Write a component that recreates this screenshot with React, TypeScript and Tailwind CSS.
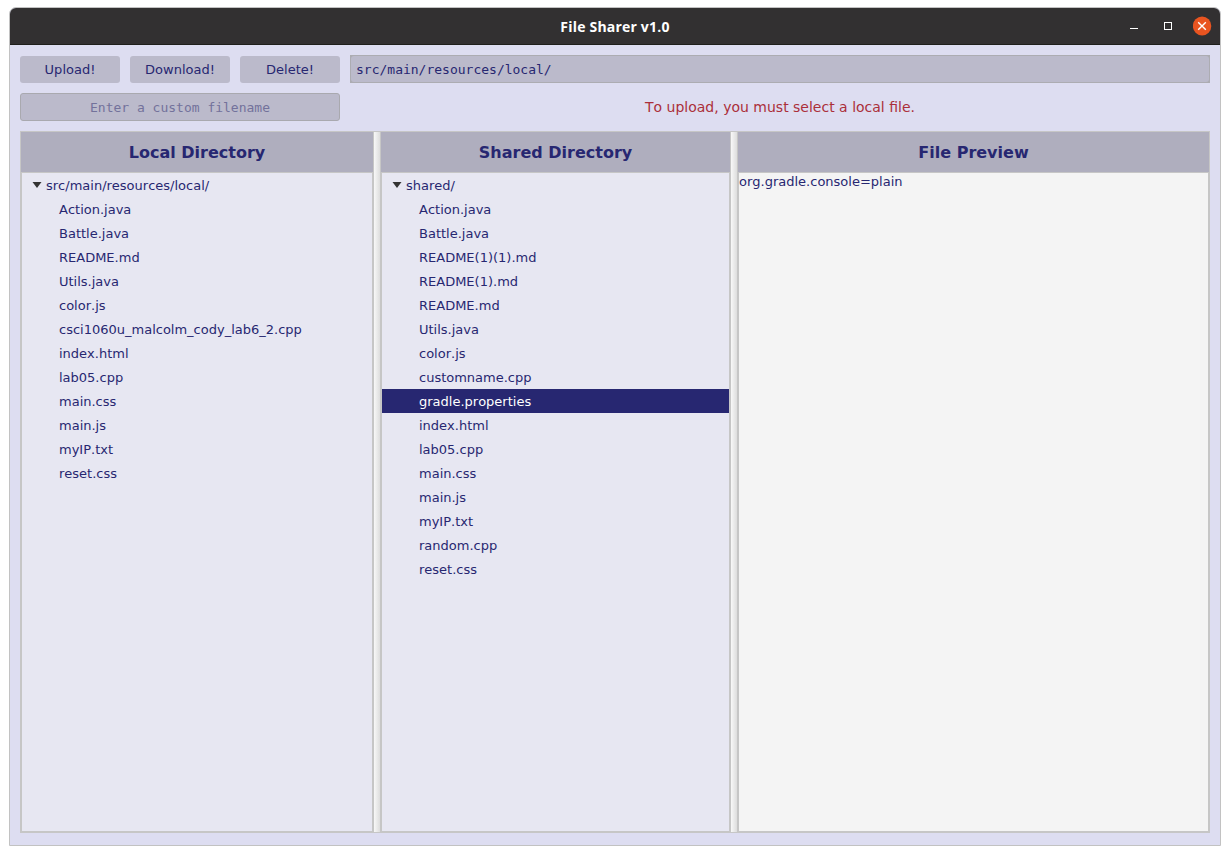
import type { ReactNode } from "react";

const localFiles = [
  "Action.java", "Battle.java", "README.md", "Utils.java", "color.js",
  "csci1060u_malcolm_cody_lab6_2.cpp", "index.html", "lab05.cpp", "main.css",
  "main.js", "myIP.txt", "reset.css",
];

const sharedFiles = [
  "Action.java", "Battle.java", "README(1)(1).md", "README(1).md", "README.md",
  "Utils.java", "color.js", "customname.cpp", "gradle.properties", "index.html",
  "lab05.cpp", "main.css", "main.js", "myIP.txt", "random.cpp", "reset.css",
];

function TitleBar() {
  return (
    <header className="grid h-[37px] shrink-0 grid-cols-[1fr_auto_1fr] items-center rounded-t-[6px] border-b border-[#1f1f1b] bg-[#323031] pr-2">
      <span />
      <h1 className="pt-px pl-2 font-['Open_Sans',sans-serif] text-[14px] leading-5 font-bold tracking-[0.2px] text-white">File Sharer v1.0</h1>
      <div className="flex items-center justify-end">
        <button aria-label="Minimize" className="mr-[26px]">
          <svg width="8" height="8" className="block" shapeRendering="crispEdges"><path d="M0 6.5h8" stroke="#fff" /></svg>
        </button>
        <button aria-label="Maximize" className="mr-[21px]">
          <svg width="8" height="8" className="block" shapeRendering="crispEdges"><path d="M.5.5h7v7h-7z" fill="none" stroke="#fff" /></svg>
        </button>
        <button aria-label="Close">
          <svg width="19" height="20" viewBox="0 0 19 20" className="block">
            <ellipse cx="9.1" cy="10" rx="9.2" ry="9.5" fill="#e95420" />
            <path d="M5.2 6.2l7.6 7.6M12.8 6.2l-7.6 7.6" stroke="#fff" strokeWidth="1.4" />
          </svg>
        </button>
      </div>
    </header>
  );
}

function Button({ children }: { children: ReactNode }) {
  return (
    <button className="h-[27px] w-[100px] rounded-[3px] bg-[#bbbacb] pt-px text-[13px] text-[#272771]">{children}</button>
  );
}

function Panel({ title, className, children }: { title: string; className: string; children: ReactNode }) {
  return (
    <section className={`flex flex-col border-[#c6c6c6] ${className}`}>
      <h2 className="flex h-10 shrink-0 items-center justify-center bg-[#afaebe] pt-[2px] text-[16px] font-bold">{title}</h2>
      {children}
    </section>
  );
}

function Tree({ root, files, selected }: { root: string; files: string[]; selected?: string }) {
  return (
    <div className="grow border border-[#c6c6c6] bg-[#e7e7f2] text-[13px] leading-[26px]">
      <div className="flex h-6 items-start pl-[10px]">
        <svg width="10" height="6" className="mt-[9px] mr-[4px] block"><path d="M.5 0h9L5 6z" fill="#333" /></svg>
        {root}
      </div>
      <ul>
        {files.map((f) => (
          <li key={f} className={f === selected ? "h-6 bg-[#272771] pl-[37px] text-white" : "h-6 pl-[37px]"}>{f}</li>
        ))}
      </ul>
    </div>
  );
}

function Divider() {
  return <div className="w-[6px] shrink-0 bg-linear-to-r from-[#f8f8f8] to-[#dddddd]" />;
}

export default function App() {
  return (
    <div className="h-[855px] w-[1230px] bg-white pt-[7px] pl-[9px] font-['DejaVu_Sans',sans-serif] text-[#272771] [font-kerning:none]">
      <main className="flex h-[839px] w-[1212px] flex-col rounded-t-[7px] border border-[#c2c2c2] bg-[#ddddf1]">
        <TitleBar />
        <div className="flex items-center gap-[10px] px-[10px] pt-[10px]">
          <Button>Upload!</Button>
          <Button>Download!</Button>
          <Button>Delete!</Button>
          <div className="flex h-7 grow bg-[#acacb2] p-px font-['DejaVu_Sans_Mono',monospace] text-[13px]">
            <div className="flex grow items-center rounded-[3px] bg-[#bbbacb] pt-[2px] pl-[5px]">src/main/resources/local/</div>
          </div>
        </div>
        <div className="flex px-[10px] pt-[10px]">
          <div className="flex h-7 w-[320px] items-center justify-center rounded-[3px] border border-[#a9a9af] bg-[#bbbacb] pt-[2px] font-['DejaVu_Sans_Mono',monospace] text-[13px] text-[#73729b]">Enter a custom filename</div>
          <p className="flex grow items-center justify-center pl-[10px] text-[14px] text-[#ab2f3a]">To upload, you must select a local file.</p>
        </div>
        <div className="mx-[10px] mt-[10px] flex h-[702px] border border-[#c6c6c6]">
          <Panel title="Local Directory" className="w-[353px] border-r">
            <Tree root="src/main/resources/local/" files={localFiles} />
          </Panel>
          <Divider />
          <Panel title="Shared Directory" className="w-[351px] border-x">
            <Tree root="shared/" files={sharedFiles} selected="gradle.properties" />
          </Panel>
          <Divider />
          <Panel title="File Preview" className="grow border-l">
            <pre className="grow border border-[#c6c6c6] bg-[#f4f4f4] font-['DejaVu_Sans',sans-serif] text-[13px] leading-[17px]">org.gradle.console=plain</pre>
          </Panel>
        </div>
      </main>
    </div>
  );
}
